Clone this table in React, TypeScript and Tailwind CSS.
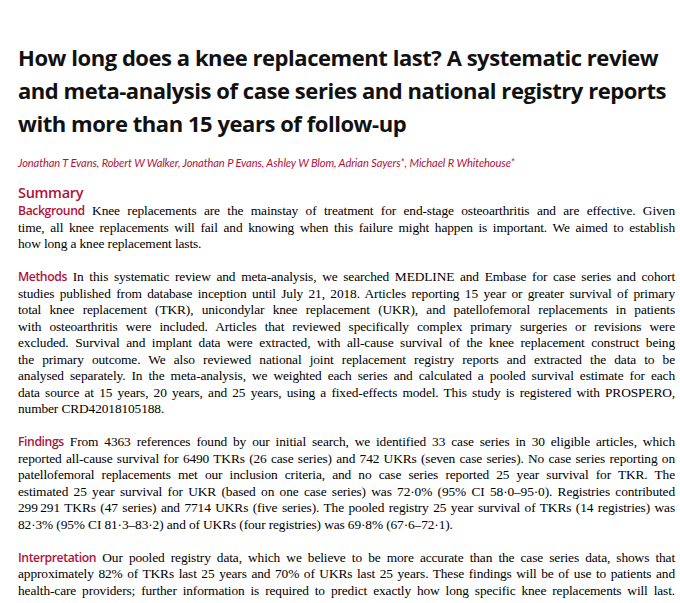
const sans = "font-['Open_Sans','Noto_Sans',sans-serif]";

const SECTIONS: { label: string; lines: string[] }[] = [
  {
    label: "Background",
    lines: [
      "Knee replacements are the mainstay of treatment for end-stage osteoarthritis and are effective. Given",
      "time, all knee replacements will fail and knowing when this failure might happen is important. We aimed to establish",
      "how long a knee replacement lasts.",
    ],
  },
  {
    label: "Methods",
    lines: [
      "In this systematic review and meta-analysis, we searched MEDLINE and Embase for case series and cohort",
      "studies published from database inception until July 21, 2018. Articles reporting 15 year or greater survival of primary",
      "total knee replacement (TKR), unicondylar knee replacement (UKR), and patellofemoral replacements in patients",
      "with osteoarthritis were included. Articles that reviewed specifically complex primary surgeries or revisions were",
      "excluded. Survival and implant data were extracted, with all-cause survival of the knee replacement construct being",
      "the primary outcome. We also reviewed national joint replacement registry reports and extracted the data to be",
      "analysed separately. In the meta-analysis, we weighted each series and calculated a pooled survival estimate for each",
      "data source at 15 years, 20 years, and 25 years, using a fixed-effects model. This study is registered with PROSPERO,",
      "number CRD42018105188.",
    ],
  },
  {
    label: "Findings",
    lines: [
      "From 4363 references found by our initial search, we identified 33 case series in 30 eligible articles, which",
      "reported all-cause survival for 6490 TKRs (26 case series) and 742 UKRs (seven case series). No case series reporting on",
      "patellofemoral replacements met our inclusion criteria, and no case series reported 25 year survival for TKR. The",
      "estimated 25 year survival for UKR (based on one case series) was 72·0% (95% CI 58·0–95·0). Registries contributed",
      "299\u202f291 TKRs (47 series) and 7714 UKRs (five series). The pooled registry 25 year survival of TKRs (14 registries) was",
      "82·3% (95% CI 81·3–83·2) and of UKRs (four registries) was 69·8% (67·6–72·1).",
    ],
  },
  {
    label: "Interpretation",
    lines: [
      "Our pooled registry data, which we believe to be more accurate than the case series data, shows that",
      "approximately 82% of TKRs last 25 years and 70% of UKRs last 25 years. These findings will be of use to patients and",
      "health-care providers; further information is required to predict exactly how long specific knee replacements will last.",
    ],
  },
];

function Section({ label, lines, justifyLast }: { label: string; lines: string[]; justifyLast?: boolean }) {
  return (
    <p className="font-['Liberation_Serif',serif] text-[13.4px] leading-[16.5px] tracking-[-0.12px] text-black">
      {lines.map((line, i) => {
        const isLast = i === lines.length - 1;
        return (
          <span
            key={i}
            className={
              isLast && !justifyLast
                ? "block text-left"
                : "block text-justify [text-align-last:justify]"
            }
          >
            {i === 0 && (
              <>
                <span className={`${sans} text-[12.2px] font-semibold tracking-[-0.4px] text-[#b0123b]`}>{label}</span>{" "}
              </>
            )}
            {line}
          </span>
        );
      })}
    </p>
  );
}

export default function App() {
  return (
    <div className="min-h-[603px] w-[680px] bg-white pl-[18px] pr-[5px] pt-[41px]">
      <h1 className={`${sans} text-[22px] font-bold leading-[33px] tracking-[-0.45px] text-[#111]`}>
        How long does a knee replacement last? A systematic review and meta-analysis of case series and national registry reports with more than 15 years of follow-up
      </h1>

      <p className="mt-[15px] font-['Lato','Open_Sans',sans-serif] text-[11.1px] italic leading-[16px] tracking-[-0.1px] text-[#b0123b]">
        Jonathan T Evans, Robert W Walker, Jonathan P Evans, Ashley W Blom, Adrian Sayers*, Michael R Whitehouse*
      </p>

      <h2 className={`${sans} mt-[12px] text-[14.5px] font-semibold leading-[20px] tracking-[-0.3px] text-[#b0123b]`}>Summary</h2>

      <div className="flex flex-col gap-[16.5px]">
        {SECTIONS.map((s) => (
          <Section key={s.label} label={s.label} lines={s.lines} justifyLast={s.label === "Interpretation"} />
        ))}
      </div>
    </div>
  );
}
